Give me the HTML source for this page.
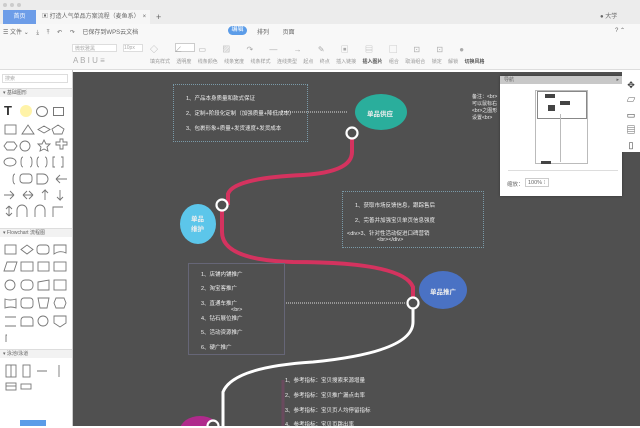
<!DOCTYPE html>
<html><head><meta charset="utf-8"><style>
*{margin:0;padding:0;box-sizing:border-box}
body{width:640px;height:426px;overflow:hidden;background:#fff;font-family:"Liberation Sans","Noto Sans CJK SC",sans-serif;position:relative;font-size:6px;color:#666}
.abs{position:absolute}
.bx{position:absolute;border:1px dotted #7a9aa8}
.t{position:absolute;color:#eee;font-size:5.5px;white-space:nowrap}
.sh{position:absolute;border:1px solid #777;width:11px;height:9px}
</style></head><body>
<div class="abs" style="left:0;top:0;width:640px;height:10px;background:#ececec"></div>
<div class="abs" style="left:3px;top:3px;width:4px;height:4px;border-radius:50%;background:#ccc"></div>
<div class="abs" style="left:10px;top:3px;width:4px;height:4px;border-radius:50%;background:#ccc"></div>
<div class="abs" style="left:17px;top:3px;width:4px;height:4px;border-radius:50%;background:#ccc"></div>
<div class="abs" style="left:0;top:10px;width:640px;height:14px;background:#ececec"></div>
<div class="abs" style="left:3px;top:10px;width:33px;height:14px;background:#6d9de8;color:#fff;text-align:center;line-height:14px">首页</div>
<div class="abs" style="left:36px;top:10px;width:114px;height:14px;background:#f6f6f6;line-height:14px;padding-left:6px">▣ 打造人气单品方案流程（麦鱼系）　×</div>
<div class="abs" style="left:156px;top:10px;line-height:14px;font-size:9px">+</div>
<div class="abs" style="left:600px;top:10px;line-height:14px">● 大学</div>
<div class="abs" style="left:0;top:24px;width:640px;height:46px;background:#f8f8f8;border-bottom:1px solid #ddd"></div>
<div class="abs" style="left:3px;top:27px">☰ 文件 ⌄　 ⤓　 ⤒　 ↶　 ↷ 　已保存到WPS云文档</div>
<div class="abs" style="left:228px;top:26px;width:19px;height:9px;border-radius:5px;background:#5b9ce8;color:#fff;text-align:center;line-height:9px">编辑</div>
<div class="abs" style="left:257px;top:27px">排列　　 页面</div>
<div class="abs" style="left:615px;top:27px">? ⌃</div>
<div class="abs" style="left:72px;top:44px;width:45px;height:8px;border:1px solid #ddd;background:#fff;color:#aaa;font-size:5px;padding-left:2px">微软雅黑</div>
<div class="abs" style="left:123px;top:44px;width:20px;height:8px;border:1px solid #ddd;background:#fff;color:#aaa;font-size:5px">10px</div>
<div class="abs" style="left:73px;top:56px;color:#aaa;font-size:8px">A B I U ≡</div>
<div class="abs" style="left:175px;top:43px;width:20px;height:9px;border:1px solid #ccc;background:#fff"></div>
<div class="abs" style="left:150px;top:58px;font-size:5px;color:#999;word-spacing:5px">填充样式 透明度 线条颜色 线条宽度 线条样式 连线类型 起点 终点 插入链接 <b style="color:#555">插入图片</b> 组合 取消组合 锁定 解锁 <b style="color:#555">切换风格</b></div>
<div class="abs" style="left:150px;top:44px;font-size:8px;color:#aaa;word-spacing:14px">◇ ∠ ▭ ▨ ↷ — → ✎ ▣ ▤ ▢ ⊡ ⊡ ●</div>
<!-- left panel -->
<div class="abs" style="left:0;top:70px;width:73px;height:356px;background:#fff;border-right:1px solid #ccc"></div>
<div class="abs" style="left:2px;top:74px;width:66px;height:9px;border:1px solid #ddd;font-size:5px;color:#aaa;padding-left:2px">搜索</div>
<div class="abs" style="left:0;top:88px;width:72px;height:9px;background:#f2f2f2;border-top:1px solid #ddd;font-size:5px;padding-left:3px;line-height:9px">▾ 基础图形</div>
<div class="abs" style="left:4px;top:103px;font-size:13px;color:#333;font-weight:bold">T</div>
<div class="abs" style="left:20px;top:105px;width:12px;height:12px;border-radius:50%;background:#fff3a8"></div>
<div class="abs" style="left:36px;top:106px;width:12px;height:11px;border-radius:50%;border:1px solid #777"></div>
<div class="sh" style="left:53px;top:107px"></div>
<svg class="abs" style="left:3px;top:122px" width="66" height="100" stroke="#777" fill="none" stroke-width="0.9">
<rect x="2" y="3" width="11" height="9"/><path d="M19 12L25 3 31 12Z"/><path d="M35 7.5L41 4 47 7.5 41 11Z"/><path d="M55 3L61 7 59 12 51 12 49 7Z"/>
<path d="M4 20h7l3 4-3 4H4l-3-4z"/><circle cx="22" cy="24" r="5"/><path d="M41 18l2 4 4 0-3 3 1 4-4-2-4 2 1-4-3-3 4 0z"/><path d="M53 20h4v-3h3v3h4v3h-4v4h-3v-4h-4z"/>
<ellipse cx="7" cy="40" rx="6" ry="4"/><path d="M20 35q-2 0-2 5t2 5M27 35q2 0 2 5t-2 5M36 35q-2 0-2 5t2 5M42 35q2 0 2 5t-2 5M52 35h-2v10h2M58 35h2v10h-2"/>
<path d="M12 52q-2 0-2 5t2 5"/><rect x="17" y="52" width="12" height="9" rx="3"/><path d="M34 52h6a5 5 0 010 10h-6z"/><path d="M64 57H53M53 57l4-4M53 57l4 4"/>
<path d="M1 73h10M11 73l-4-4M11 73l-4 4M20 73h10M20 73l4-4M20 73l4 4M30 73l-4-4M30 73l-4 4M42 78v-10l-3 3M42 68l3 3M57 68v10l-3-3M57 78l3-3"/>
<path d="M6 84v10M6 84l-3 3M6 84l3 3M6 94l-3-3M6 94l3-3M14 95v-7a5 5 0 0110 0v7M32 95v-7a5 5 0 0110 0v7M50 95v-10h10"/>
</svg>
<div class="abs" style="left:0;top:228px;width:72px;height:9px;background:#f2f2f2;border-top:1px solid #ddd;font-size:5px;padding-left:3px;line-height:9px">▾ Flowchart 流程图</div>
<svg class="abs" style="left:3px;top:242px" width="66" height="100" stroke="#777" fill="none" stroke-width="0.9">
<rect x="2" y="3" width="11" height="9"/><path d="M18 7.5L24 3 30 7.5 24 12Z"/><rect x="34" y="3" width="12" height="9" rx="3"/><path d="M51 3h12v8q-6-3-12 1z"/>
<path d="M4 20h10l-3 9H1z"/><rect x="18" y="20" width="12" height="9"/><rect x="35" y="20" width="11" height="9"/><rect x="51" y="20" width="12" height="9"/>
<circle cx="7" cy="43" r="5"/><rect x="18" y="38" width="12" height="10" rx="4"/><path d="M35 40l11-2v10H35z"/><rect x="51" y="38" width="12" height="10"/>
<path d="M2 57q5 2 11 0v9q-5-2-11 0z"/><rect x="18" y="56" width="12" height="10" rx="3"/><path d="M35 56h11l-2 10h-7z"/><path d="M53 56h8l2 5-2 5h-8l-2-5z"/>
<path d="M2 75h11M2 84h11"/><path d="M18 84v-6a3 3 0 013-3h6a3 3 0 013 3v6z"/><circle cx="40" cy="79" r="5"/><path d="M51 74h12v7l-6 4-6-4z"/>
<path d="M4 93h-1v9h1"/></svg>
<div class="abs" style="left:0;top:349px;width:72px;height:9px;background:#f2f2f2;border-top:1px solid #ddd;font-size:5px;padding-left:3px;line-height:9px">▾ 泳池/泳道</div>
<svg class="abs" style="left:3px;top:362px" width="66" height="30" stroke="#777" fill="none" stroke-width="0.9">
<rect x="3" y="3" width="10" height="12"/><path d="M8 3v12"/><rect x="20" y="3" width="7" height="12"/><path d="M34 9h10M56 3v12"/><rect x="3" y="21" width="10" height="7"/><path d="M3 24h10"/><rect x="18" y="22" width="10" height="5"/></svg>
<div class="abs" style="left:20px;top:420px;width:26px;height:6px;background:#5b9ce8"></div>
<!-- canvas -->
<div class="abs" style="left:73px;top:72px;width:567px;height:354px;background:#505050"></div>
<svg class="abs" style="left:73px;top:72px" width="567" height="354" fill="none">
<path d="M279 61V80Q279 100 230 103Q160 106 155 122V133" stroke="#d4335f" stroke-width="4"/>
<path d="M149 133V160Q149 188 220 190Q330 190 340 215V231" stroke="#d4335f" stroke-width="4"/>
<path d="M340 231V250Q340 280 240 290Q160 295 150 320V354" stroke="#fff" stroke-width="3"/>
<path d="M209 40H275M213 231H333" stroke="#ddd" stroke-dasharray="1 1"/>
<ellipse cx="308" cy="40" rx="26" ry="18" fill="#2aae9c"/>
<ellipse cx="125" cy="152" rx="18" ry="20" fill="#5cc6ea"/>
<ellipse cx="370" cy="218" rx="24" ry="19" fill="#4a72c4"/>
<ellipse cx="127" cy="358" rx="20" ry="14" fill="#b02a8c"/>
<circle cx="279" cy="61" r="5.5" fill="#505050" stroke="#fff" stroke-width="2.2"/>
<circle cx="149" cy="133" r="5.5" fill="#505050" stroke="#fff" stroke-width="2.2"/>
<circle cx="340" cy="231" r="5.5" fill="#505050" stroke="#fff" stroke-width="2.2"/>
<circle cx="140" cy="354" r="5.5" fill="#505050" stroke="#fff" stroke-width="2.2"/>
<path d="M210 308V354" stroke="#6a4a5e" stroke-width="3"/>
</svg>
<div class="t" style="left:367px;top:108px;font-size:6.5px;font-weight:bold">单品供应</div>
<div class="t" style="left:191px;top:215px;font-size:6.5px;font-weight:bold;line-height:10px;white-space:normal;width:14px">单品维护</div>
<div class="t" style="left:430px;top:286px;font-size:6.5px;font-weight:bold">单品推广</div>
<div class="bx" style="left:173px;top:84px;width:135px;height:58px"></div>
<div class="t" style="left:186px;top:94px">1、产品本身质量和款式保证</div>
<div class="t" style="left:186px;top:109px">2、定制+阶段化定制（加强质量+降低成本）</div>
<div class="t" style="left:186px;top:124px">3、包裹形象+质量+发货速度+发货成本</div>
<div class="bx" style="left:342px;top:191px;width:142px;height:57px"></div>
<div class="t" style="left:355px;top:201px">1、获取市场反馈信息，跟踪售后</div>
<div class="t" style="left:355px;top:216px">2、完善并加强宝贝单页信息强度</div>
<div class="t" style="left:347px;top:229px">&lt;div&gt;3、针对性活动促进口碑营销</div>
<div class="t" style="left:377px;top:237px">&lt;br&gt;&lt;/div&gt;</div>
<div class="bx" style="left:188px;top:263px;width:97px;height:92px;border-style:solid;border-color:#667"></div>
<div class="t" style="left:201px;top:270px">1、店铺内铺推广</div>
<div class="t" style="left:201px;top:284px">2、淘宝客推广</div>
<div class="t" style="left:201px;top:299px">3、直通车推广</div>
<div class="t" style="left:231px;top:307px">&lt;br&gt;</div>
<div class="t" style="left:201px;top:314px">4、钻石展位推广</div>
<div class="t" style="left:201px;top:328px">5、活动资源推广</div>
<div class="t" style="left:201px;top:343px">6、硬广推广</div>
<div class="t" style="left:285px;top:376px">1、参考指标：宝贝搜索来源增量</div>
<div class="t" style="left:285px;top:391px">2、参考指标：宝贝推广漏点击率</div>
<div class="t" style="left:285px;top:406px">3、参考指标：宝贝页人均停留指标</div>
<div class="t" style="left:285px;top:420px">4、参考指标：宝贝页跳出率</div>
<div class="t" style="left:472px;top:94px;font-size:5px;line-height:7px">备注：&lt;br&gt;<br>可以鼠标右<br>&lt;br&gt;之图形<br>设置&lt;br&gt;</div>
<!-- nav panel -->
<div class="abs" style="left:500px;top:76px;width:122px;height:120px;background:#fff;box-shadow:0 0 2px #333"></div>
<div class="abs" style="left:500px;top:76px;width:122px;height:8px;background:#c8c8c8;font-size:5px;line-height:8px;padding-left:4px">导航<span style="float:right;padding-right:3px">▸</span></div>
<div class="abs" style="left:535px;top:90px;width:53px;height:74px;border:1px solid #bbb"></div>
<div class="abs" style="left:537px;top:91px;width:50px;height:28px;border:1px solid #888"></div>
<div class="abs" style="left:545px;top:94px;width:10px;height:4px;background:#444"></div>
<div class="abs" style="left:560px;top:101px;width:10px;height:4px;background:#444"></div>
<div class="abs" style="left:548px;top:105px;width:7px;height:6px;background:#444"></div>
<div class="abs" style="left:541px;top:161px;width:10px;height:3px;background:#444"></div>
<div class="abs" style="left:560px;top:114px;width:1px;height:48px;background:#bbb"></div>
<div class="abs" style="left:508px;top:170px;width:110px;height:1px;background:#ddd"></div>
<div class="abs" style="left:507px;top:180px;font-size:5.5px">缩放：</div>
<div class="abs" style="left:525px;top:178px;width:24px;height:9px;border:1px solid #ccc;font-size:5.5px;line-height:8px;padding-left:2px">100% ⁝</div>
<div class="abs" style="left:622px;top:72px;width:18px;height:80px;background:#fff"></div>
<div class="abs" style="left:626px;top:78px;font-size:9px;color:#333;line-height:15px;text-align:center;width:10px">✥<br>▱<br>▭<br>▤<br>▯</div>
</body></html>
